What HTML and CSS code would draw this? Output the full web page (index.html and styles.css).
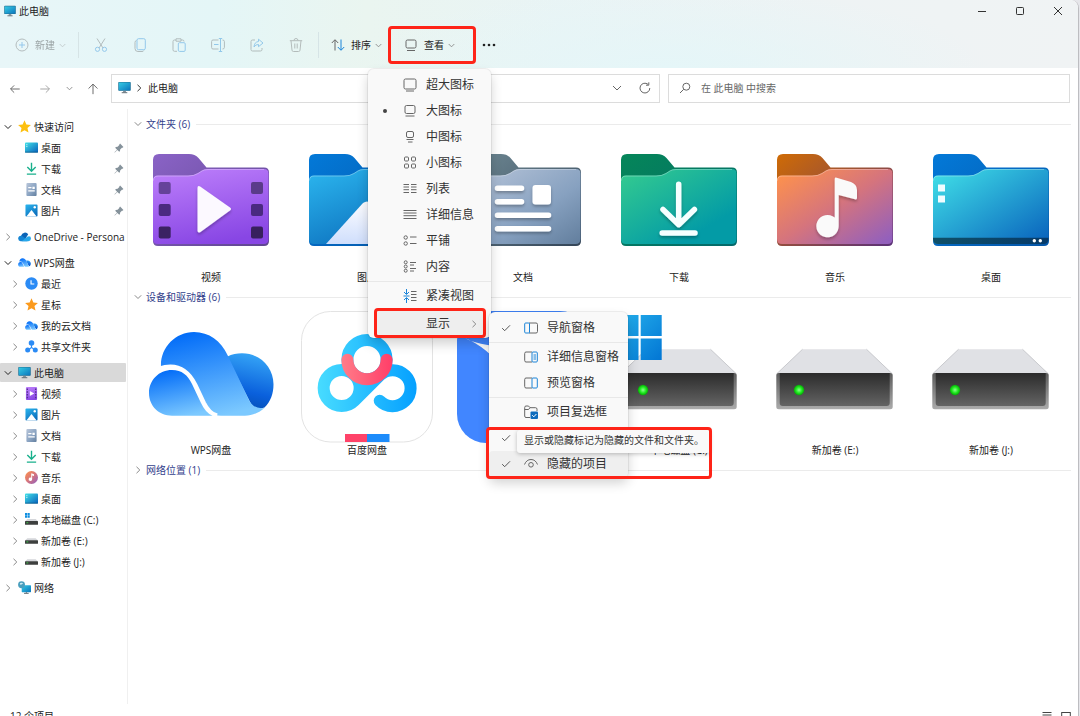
FILE: index.html
```html
<!DOCTYPE html>
<html lang="zh-CN">
<head>
<meta charset="utf-8">
<title>此电脑</title>
<link rel="stylesheet" href="styles.css">
</head>
<body>
<svg class="sprite" width="0" height="0" aria-hidden="true">
  <defs>
    <linearGradient id="g-screen" x1="0" y1="0" x2="1" y2="1"><stop offset="0" stop-color="#35cbe4"/><stop offset="1" stop-color="#0b76bd"/></linearGradient>
    <linearGradient id="g-vb" x1="0" y1="0" x2="1" y2="1"><stop offset="0" stop-color="#8a63c6"/><stop offset="1" stop-color="#5f4590"/></linearGradient>
    <linearGradient id="g-vf" x1="0.2" y1="0" x2="0.5" y2="1"><stop offset="0" stop-color="#bb7dfa"/><stop offset="1" stop-color="#8846e4"/></linearGradient>
    <linearGradient id="g-pb" x1="0" y1="0" x2="1" y2="1"><stop offset="0" stop-color="#0379d8"/><stop offset="1" stop-color="#0556a8"/></linearGradient>
    <linearGradient id="g-pf" x1="0" y1="0" x2="0.6" y2="1"><stop offset="0" stop-color="#2cb7ef"/><stop offset="1" stop-color="#0c6fbd"/></linearGradient>
    <linearGradient id="g-mt" x1="0" y1="0" x2="0" y2="1"><stop offset="0" stop-color="#fdfdff"/><stop offset="1" stop-color="#cfdefc"/></linearGradient>
    <linearGradient id="g-db" x1="0" y1="0" x2="1" y2="1"><stop offset="0" stop-color="#6f8994"/><stop offset="1" stop-color="#344558"/></linearGradient>
    <linearGradient id="g-df" x1="0" y1="0" x2="1" y2="1"><stop offset="0" stop-color="#b9c6da"/><stop offset="0.6" stop-color="#87a1c0"/><stop offset="1" stop-color="#627e9d"/></linearGradient>
    <linearGradient id="g-lb" x1="0" y1="0" x2="1" y2="1"><stop offset="0" stop-color="#058659"/><stop offset="1" stop-color="#04696b"/></linearGradient>
    <linearGradient id="g-lf" x1="0" y1="0" x2="0.9" y2="1"><stop offset="0" stop-color="#35cc8f"/><stop offset="0.8" stop-color="#039ba6"/></linearGradient>
    <linearGradient id="g-mb" x1="0" y1="0" x2="1" y2="1"><stop offset="0" stop-color="#cf6b05"/><stop offset="1" stop-color="#5a3178"/></linearGradient>
    <linearGradient id="g-mf" x1="0" y1="0.1" x2="0.9" y2="1"><stop offset="0" stop-color="#fd914d"/><stop offset="0.5" stop-color="#d5747d"/><stop offset="1" stop-color="#9360bc"/></linearGradient>
    <linearGradient id="g-kf" x1="0" y1="0" x2="1" y2="1"><stop offset="0" stop-color="#41e2e8"/><stop offset="1" stop-color="#0860bc"/></linearGradient>
    <linearGradient id="g-kt" x1="0" y1="0" x2="1" y2="0"><stop offset="0" stop-color="#0f5068"/><stop offset="1" stop-color="#063a69"/></linearGradient>
    <linearGradient id="g-w1" x1="0.3" y1="0" x2="0.6" y2="1"><stop offset="0" stop-color="#036df8"/><stop offset="1" stop-color="#7cc9ff"/></linearGradient>
    <linearGradient id="g-w2" x1="0.6" y1="0" x2="0.4" y2="1"><stop offset="0" stop-color="#36a6f7"/><stop offset="0.7" stop-color="#0a60dc"/><stop offset="1" stop-color="#0450b8"/></linearGradient>
    <linearGradient id="g-bd" gradientUnits="userSpaceOnUse" x1="16" y1="0" x2="116" y2="0"><stop offset="0" stop-color="#48dcff"/><stop offset="1" stop-color="#05a0ff"/></linearGradient>
    <linearGradient id="g-br" gradientUnits="userSpaceOnUse" x1="40" y1="0" x2="92" y2="0"><stop offset="0" stop-color="#ff7d89"/><stop offset="1" stop-color="#ff3d68"/></linearGradient>
    <linearGradient id="g-hd" x1="0" y1="0" x2="0" y2="1"><stop offset="0" stop-color="#2b2b2b"/><stop offset="1" stop-color="#646464"/></linearGradient>
    <linearGradient id="g-hs" x1="0" y1="0" x2="0" y2="1"><stop offset="0" stop-color="#5c5c5c"/><stop offset="1" stop-color="#ababab"/></linearGradient>
    <radialGradient id="g-led"><stop offset="0" stop-color="#8dff8d"/><stop offset="0.6" stop-color="#1be81b"/><stop offset="1" stop-color="#0aa30a"/></radialGradient>
    <linearGradient id="g-win" x1="0" y1="0" x2="1" y2="1"><stop offset="0" stop-color="#25b0ec"/><stop offset="1" stop-color="#0276d4"/></linearGradient>
    <filter id="f-soft" x="-20%" y="-20%" width="140%" height="150%"><feDropShadow dx="0" dy="2" stdDeviation="1.5" flood-opacity="0.28"/></filter>
  </defs>

  <symbol id="folder-back" viewBox="0 0 132 132"><path d="M8 22q0-6 6-6h30q6 0 9.500 4l8 9.500H119q5 0 5 5V103q0 5-5 5H13q-5 0-5-5z"/></symbol>
  <symbol id="folder-front" viewBox="0 0 132 132"><path d="M8 42.500q0-5 5-5H43q6 0 10-2.500l4-2.600q2.500-1.400 6-1.400H119q4.500 0 4.500 4.500V101q0 5-5 5H13q-5 0-5-5z"/><path d="M8.500 42.500q0-4.500 4.500-4.500H43q6 0 10-2.500l4-2.600q2.500-1.400 6-1.400H119" fill="none" stroke="#fff" stroke-opacity=".3"/></symbol>
  <symbol id="drive" viewBox="0 0 132 132">
    <path d="M33.500 38.300h64L123.500 63H7.500z" fill="#e0e1e5"/><path d="M33.500 38.300L7.500 63M97.500 38.300L123.500 63" stroke="#c9cace" fill="none"/>
    <rect x="7.300" y="62" width="116.400" height="36.300" rx="2.500" fill="url(#g-hs)"/>
    <path d="M10.700 62h110v30q0 3-3 3H13.700q-3 0-3-3z" fill="url(#g-hd)"/>
    <circle cx="30" cy="79" r="5.200" fill="url(#g-led)"/>
  </symbol>
  <symbol id="wps" viewBox="0 0 132 132">
    <path d="M82 45.700C87 43 92 42.300 97 42.300c18 0 31.500 14 31.500 31 0 9.500-3 17.500-9 23.200-7 2.500-11.500.5-14.500-5.500z" fill="url(#g-w2)"/>
    <path d="M16 56C15 37 30 21 49 21c15 0 27 9 33.500 23L104 89q4.500 9.500 15.500 8c-6 5-12.500 7.700-19.500 7.700H76C67 104.700 63 99 59 91l-9-19C43 58 32 53 16 56z" fill="url(#g-w1)"/>
    <path d="M14 58C32 52 43 60 50 74l8.500 18Q64 103 72 105" fill="none" stroke="#fff" stroke-width="5"/>
    <path d="M27 59c10 0 15.500 5 20 14l8.500 18q5 11 12 13.700H27C14 104.700 4 95 4 82S14 59 27 59z" fill="url(#g-w1)"/>
  </symbol>

  <symbol id="i-pc" viewBox="0 0 14 14"><rect x=".3" y="1" width="13.400" height="9.600" rx=".8" fill="#216d91"/><rect x=".9" y="1.600" width="12.200" height="8.400" fill="url(#g-screen)"/><path d="M5.500 10.600h3v1.600h-3z" fill="#7f8d96"/><path d="M4 12.600h6" stroke="#56646d" stroke-width="1"/></symbol>
  <symbol id="i-desk" viewBox="0 0 14 14"><rect x="0" y="1.500" width="14" height="11" rx="1" fill="url(#g-kf)"/><path d="M1.500 4h1M1.500 6h1" stroke="#fff"/><path d="M0 11.500h14q0 1-1 1H1q-1 0-1-1z" fill="#0b5a83"/></symbol>
  <symbol id="i-down" viewBox="0 0 14 14" fill="none" stroke="#18b08c" stroke-width="1.500"><path d="M7 .8v8.700M2.500 5.500L7 10l4.500-4.500M2 13h10"/></symbol>
  <symbol id="i-doc" viewBox="0 0 14 14"><rect x="1.500" y="0" width="11" height="14" rx="1" fill="url(#g-df)"/><path d="M3.500 5h3.500M3.500 8.500h7" stroke="#fff" stroke-width="1.300"/><path d="M8 4h2.500v2.500H8z" fill="#fff"/></symbol>
  <symbol id="i-pic" viewBox="0 0 14 14"><rect x=".5" y=".5" width="13" height="13" rx="1" fill="url(#g-pf)"/><path d="M1.500 13.500L7 6.500l5.500 7z" fill="#fff"/><circle cx="10.500" cy="3.500" r="1.300" fill="#fff"/></symbol>
  <symbol id="i-video" viewBox="0 0 14 14"><rect x="1" y="0" width="12" height="14" rx="1" fill="url(#g-vf)"/><path d="M2.500 1.500v11M11.500 1.500v11" stroke="#54308f" stroke-width="1.500" stroke-dasharray="1.600 1.400"/><path d="M5.200 4.200v5.600L10 7z" fill="#fff"/></symbol>
  <symbol id="i-music" viewBox="0 0 14 14"><circle cx="7" cy="7" r="7" fill="url(#g-mf)"/><path d="M6.700 2.500l3 1v2l-2-.6V9a1.900 1.900 0 1 1-1-1.700z" fill="#fff"/></symbol>
  <symbol id="i-star" viewBox="0 0 14 14"><path d="M7 .3l2 4.500 4.900.5-3.700 3.300 1.100 4.900L7 11l-4.300 2.500 1.100-4.900L.1 5.300 5 4.800z" fill="currentColor"/></symbol>
  <symbol id="i-one" viewBox="0 0 14 14"><path d="M3.500 6a4.200 4.200 0 0 1 7.500-1.500L7 11H3z" fill="#0b64b7"/><path d="M.2 9.300A3 3 0 0 1 4 6.200l7 4.800-1 1H2.800Q.4 11.800.2 9.300z" fill="#1585d4"/><path d="M4 12l6-4.800q4-1.300 4 2.200-.2 2.600-2.800 2.600z" fill="#28a8ea"/></symbol>
  <symbol id="i-wps" viewBox="3 18 127 90"><use href="#wps" width="132" height="132"/></symbol>
  <symbol id="i-clock" viewBox="0 0 14 14"><circle cx="7" cy="7" r="6.700" fill="#2b8bf5"/><path d="M6.500 3.500V7.500H10" fill="none" stroke="#fff" stroke-width="1.200"/></symbol>
  <symbol id="i-share" viewBox="0 0 14 14"><path d="M7 4v4L3 11M7 8l4 3" stroke="#2b8bf5" stroke-width="1.200" fill="none"/><circle cx="7" cy="3.300" r="3" fill="#2b8bf5"/><circle cx="2.900" cy="10.800" r="2.700" fill="#2b8bf5"/><circle cx="11.100" cy="10.800" r="2.700" fill="#2b8bf5"/></symbol>
  <symbol id="i-hdd" viewBox="0 0 14 14"><path d="M2.500 4.500h9L14 7H0z" fill="#d4d6da"/><rect y="6.600" width="14" height="4" rx=".6" fill="#3d3f3e"/><path d="M1.500 8.500h2" stroke="#39cf49"/></symbol>
  <symbol id="i-hddc" viewBox="0 0 14 14"><path d="M2.500 6.500h9L14 9H0z" fill="#d4d6da"/><rect y="8.600" width="14" height="4" rx=".6" fill="#3d3f3e"/><path d="M1.500 10.500h2" stroke="#39cf49"/><path d="M0 0h2.300v2.300H0zM2.800 0h2.300v2.300H2.800zM0 2.800h2.300v2.300H0zM2.800 2.800h2.300v2.300H2.800z" fill="#108fe0"/></symbol>
  <symbol id="i-net" viewBox="0 0 14 14"><rect x="4" y="4.500" width="10" height="7.500" rx=".6" fill="url(#g-screen)"/><path d="M6.500 13.300h5M9 12v1" stroke="#56646d"/><circle cx="3.800" cy="4" r="3.700" fill="#4a9fbe"/><path d="M2 2.500q2-1.500 3.500 0Q4 4.500 2.500 4zM3.500 6l2-1" fill="#d0eaf0"/></symbol>
  <symbol id="i-pin" viewBox="0 0 12 12"><path d="M7.300.7l4 4-1 1-.8-.1L7.400 7.700l-.2 2-.9.9-2.300-2.300L1 11.500l-.5-.5 3.200-3L1.400 5.700l.9-.9 2-.2 2.100-2.100-.1-.8z" fill="#85929b"/></symbol>
  <symbol id="c-right" viewBox="0 0 8 8"><path d="M2.500.8L5.800 4 2.500 7.200" fill="none" stroke="currentColor" stroke-width="1"/></symbol>
  <symbol id="c-down" viewBox="0 0 8 8"><path d="M.8 2.300L4 5.500l3.200-3.200" fill="none" stroke="currentColor" stroke-width="1"/></symbol>
  <symbol id="i-check" viewBox="0 0 10 10"><path d="M1.200 5.200l2.500 2.500L9 2.300" fill="none" stroke="currentColor"/></symbol>
</svg>

<div class="window">
  <header class="chrome">
    <div class="titlebar">
      <svg class="app-icon"><use href="#i-pc"/></svg>
      <span class="title">此电脑</span>
      <button class="caption" aria-label="最小化"><svg viewBox="0 0 10 10"><path d="M1 5.500h8"/></svg></button>
      <button class="caption" aria-label="最大化"><svg viewBox="0 0 10 10"><rect x="1.500" y="1.500" width="7" height="7" rx=".8"/></svg></button>
      <button class="caption" aria-label="关闭"><svg viewBox="0 0 10 10"><path d="M1 1l8 8M9 1L1 9"/></svg></button>
    </div>
    <div class="toolbar">
      <button class="tool new" disabled>
        <svg class="ic" viewBox="0 0 14 14"><circle cx="7" cy="7" r="6"/><path class="b" d="M7 4v6M4 7h6"/></svg>新建<svg class="chev"><use href="#c-down"/></svg>
      </button>
      <span class="sep"></span>
      <button class="tool icon" disabled aria-label="剪切"><svg class="ic" viewBox="0 0 14 14"><path d="M3 .5l6 9.500M11 .5L5 10"/><circle class="b" cx="3.500" cy="11.300" r="2.100"/><circle class="b" cx="10.500" cy="11.300" r="2.100"/></svg></button>
      <button class="tool icon" disabled aria-label="复制"><svg class="ic" viewBox="0 0 14 14"><path d="M3.500 2.500Q2 2.700 2 4.500v6q0 3 3 3h4q1.500 0 1.800-1"/><rect class="b" x="4" y=".7" width="8.300" height="11" rx="1.500"/></svg></button>
      <button class="tool icon" disabled aria-label="粘贴"><svg class="ic" viewBox="0 0 14 14"><path d="M5 13.300H2.500q-1.500 0-1.500-1.500V3.500Q1 2 2.500 2H4M9 2h1.500Q12 2 12 3.500M4 .8h5v2.400H4z"/><rect class="b" x="6.300" y="4.700" width="6.900" height="8.700" rx="1.200"/></svg></button>
      <button class="tool icon" disabled aria-label="重命名"><svg class="ic" viewBox="0 0 14 14"><path d="M7.500 2H2Q.6 2 .6 3.500v6Q.6 11 2 11h5.500M11.500 2q1.900 0 1.900 1.500v6q0 1.500-1.900 1.500"/><path class="b" d="M9.500.5v13M7.800.5h3.400M7.800 13.500h3.400M3 6.500h4.500"/></svg></button>
      <button class="tool icon" disabled aria-label="共享"><svg class="ic" viewBox="0 0 14 14"><path d="M5 2H2.500Q1 2 1 3.500v8Q1 13 2.500 13h8q1.500 0 1.500-1.500V10"/><path class="b" d="M8.500 1.200L13 5 8.500 8.700V6.500Q5.500 6.300 4 9q.3-5 4.500-5.500z"/></svg></button>
      <button class="tool icon" disabled aria-label="删除"><svg class="ic" viewBox="0 0 14 14"><path d="M.8 2.700h12.400M5 2.500q0-2 2-2t2 2M2 2.700l1 9.500q.1 1.300 1.500 1.300h5q1.400 0 1.500-1.300l1-9.500M5.800 5.500v5M8.200 5.500v5"/></svg></button>
      <span class="sep late"></span>
      <button class="tool sort">
        <svg class="ic" viewBox="0 0 14 14"><path d="M4 12.500V2M.8 5L4 1.700 7.200 5"/><path class="b" d="M10 1.500V12M6.800 9L10 12.300 13.200 9"/></svg>排序<svg class="chev"><use href="#c-down"/></svg>
      </button>
      <div class="view">
        <button class="tool view-button" aria-expanded="true">
          <svg class="ic" viewBox="0 0 14 14"><rect x="2" y="2" width="10" height="8" rx="1.500"/><path d="M3 12.500h8"/></svg>查看<svg class="chev"><use href="#c-down"/></svg>
        </button>
        <ul class="menu">
          <li><button class="row"><i></i><svg class="ic" viewBox="0 0 14 14"><rect x="1" y="1" width="12" height="10" rx="1.500"/><path d="M3 13h8"/></svg>超大图标</button></li>
          <li><button class="row"><i class="dot"></i><svg class="ic" viewBox="0 0 14 14"><rect x="2" y="1.500" width="10" height="8" rx="1.500"/><path d="M2.500 12h9"/></svg>大图标</button></li>
          <li><button class="row"><i></i><svg class="ic" viewBox="0 0 14 14"><rect x="3.500" y="1.500" width="7" height="6" rx="1.500"/><path d="M3.500 9.500h7M5 12h4.500"/></svg>中图标</button></li>
          <li><button class="row"><i></i><svg class="ic" viewBox="0 0 14 14"><rect x="1.500" y="1" width="4" height="4" rx="1"/><rect x="8.500" y="1" width="4" height="4" rx="1"/><rect x="1.500" y="8" width="4" height="4" rx="1"/><rect x="8.500" y="8" width="4" height="4" rx="1"/></svg>小图标</button></li>
          <li><button class="row"><i></i><svg class="ic" viewBox="0 0 14 14"><path d="M.5 2.500H6M8 2.500h5.500M.5 5H6M8 5h5.500M.5 7.700H6M8 7.700h5.500M.5 10.500H6M8 10.500h5.500"/></svg>列表</button></li>
          <li><button class="row"><i></i><svg class="ic" viewBox="0 0 14 14"><path d="M.5 2.500h13M.5 5h13M.5 7.700h13M.5 10.500h13"/></svg>详细信息</button></li>
          <li><button class="row"><i></i><svg class="ic" viewBox="0 0 14 14"><circle cx="2.700" cy="3.500" r="1.700"/><circle cx="2.700" cy="9.500" r="1.700"/><path d="M7 3h6.500M7 9.500h6.500"/></svg>平铺</button></li>
          <li><button class="row"><i></i><svg class="ic" viewBox="0 0 14 14"><circle cx="2.700" cy="2.300" r="1.500"/><circle cx="2.700" cy="6.500" r="1.500"/><circle cx="2.700" cy="10.700" r="1.500"/><path d="M7 2.500h6M7 5h4M7 8.500h6M7 11h4"/></svg>内容</button></li>
          <li class="rule"></li>
          <li><button class="row"><i></i><svg class="ic" viewBox="0 0 14 14"><path class="b" d="M3.500 0v5M1 3l2.500 2.500L6 3M3.500 14V9M1 11l2.500-2.500L6 11M.5 7h6"/><path d="M8 2.500h5.500M8 5.500h5.500M8 8.500h5.500M8 11.500h5.500"/></svg>紧凑视图</button></li>
          <li class="has-sub">
            <button class="row marked" aria-expanded="true">显示<svg class="chev"><use href="#c-right"/></svg></button>
            <ul class="menu submenu">
              <li><button class="row"><svg class="tick"><use href="#i-check"/></svg><svg class="ic" viewBox="0 0 14 14"><path d="M5 2h7q1.500 0 1.500 1.500v7Q13.500 12 12 12H5"/><rect class="b" x=".7" y="2" width="4.800" height="10" rx="1"/></svg>导航窗格</button></li>
              <li class="rule"></li>
              <li><button class="row"><i></i><svg class="ic" viewBox="0 0 14 14"><path d="M8 2H2Q.7 2 .7 3.500v7Q.7 12 2 12h6"/><rect class="b" x="8" y="2" width="5.300" height="10" rx="1"/><path class="b" d="M9.500 5h2.500M9.500 7h2.500M9.500 9h2.500"/></svg>详细信息窗格</button></li>
              <li><button class="row"><i></i><svg class="ic" viewBox="0 0 14 14"><path d="M8 2H2Q.7 2 .7 3.500v7Q.7 12 2 12h6"/><rect class="b" x="8" y="2" width="5.300" height="10" rx="1"/></svg>预览窗格</button></li>
              <li class="rule"></li>
              <li><button class="row"><i></i><svg class="ic" viewBox="0 0 14 14"><path d="M6 12.500H2q-1.300 0-1.300-1.500V2.500Q.7 1 2 1h2.500L6 2.700h5.500q1.500 0 1.500 1.500V6M.7 4.500H4.500L6 2.700"/><rect x="6.500" y="6.500" width="7.500" height="7.500" rx="1" class="fill"/><path d="M8.200 10.200l1.600 1.600L12.400 9" class="white"/></svg>项目复选框</button></li>
              <li><button class="row" aria-label="文件扩展名"><svg class="tick"><use href="#i-check"/></svg></button></li>
              <li><button class="row hover"><svg class="tick"><use href="#i-check"/></svg><svg class="ic" viewBox="0 0 14 14"><path d="M.5 7.500Q2.500 2.500 7 2.500t6.500 5"/><circle cx="7" cy="7.800" r="2.300"/></svg>隐藏的项目</button></li>
              <li class="tooltip" role="tooltip">显示或隐藏标记为隐藏的文件和文件夹。</li>
              <li class="highlight" aria-hidden="true"></li>
            </ul>
          </li>
        </ul>
      </div>
      <button class="tool more" aria-label="更多"><svg viewBox="0 0 14 4"><circle cx="2" cy="2" r="1.300"/><circle cx="7" cy="2" r="1.300"/><circle cx="12" cy="2" r="1.300"/></svg></button>
    </div>
  </header>

  <div class="navrow">
    <button class="nav" aria-label="后退"><svg viewBox="0 0 14 14"><path d="M2 7h10.500M6 2.800L1.800 7 6 11.200"/></svg></button>
    <button class="nav dim" aria-label="前进"><svg viewBox="0 0 14 14"><path d="M1.500 7H12M8 2.800L12.200 7 8 11.200"/></svg></button>
    <button class="nav small" aria-label="最近位置"><svg class="chev"><use href="#c-down"/></svg></button>
    <button class="nav" aria-label="上移"><svg viewBox="0 0 14 14"><path d="M7 13V1.500M1.800 6.500L7 1.300l5.200 5.200"/></svg></button>
    <div class="address">
      <svg class="pc"><use href="#i-pc"/></svg><svg class="chev"><use href="#c-right"/></svg><span>此电脑</span>
      <button aria-label="历史记录"><svg viewBox="0 0 12 12"><path d="M2 4l4 4 4-4"/></svg></button>
      <button aria-label="刷新"><svg viewBox="0 0 12 12"><path d="M10.800 6A4.900 4.900 0 1 1 9 2.300M9.800.3v2.900H7"/></svg></button>
    </div>
    <label class="search">
      <svg viewBox="0 0 12 12"><circle cx="7.300" cy="4.700" r="3.500"/><path d="M4.700 7.300L1 11"/></svg>
      <input type="text" placeholder="在 此电脑 中搜索" aria-label="搜索">
    </label>
  </div>

  <div class="content">
    <nav class="tree">
      <ul>
        <li><a href="#"><svg class="chev open"><use href="#c-down"/></svg><svg class="gold"><use href="#i-star"/></svg><span>快速访问</span></a>
          <ul>
            <li><a href="#"><i></i><svg><use href="#i-desk"/></svg><span>桌面</span><svg class="pin"><use href="#i-pin"/></svg></a></li>
            <li><a href="#"><i></i><svg><use href="#i-down"/></svg><span>下载</span><svg class="pin"><use href="#i-pin"/></svg></a></li>
            <li><a href="#"><i></i><svg><use href="#i-doc"/></svg><span>文档</span><svg class="pin"><use href="#i-pin"/></svg></a></li>
            <li><a href="#"><i></i><svg><use href="#i-pic"/></svg><span>图片</span><svg class="pin"><use href="#i-pin"/></svg></a></li>
          </ul></li>
        <li><a href="#"><svg class="chev"><use href="#c-right"/></svg><svg><use href="#i-one"/></svg><span>OneDrive - Persona</span></a></li>
        <li><a href="#"><svg class="chev open"><use href="#c-down"/></svg><svg><use href="#i-wps"/></svg><span>WPS网盘</span></a>
          <ul>
            <li><a href="#"><svg class="chev"><use href="#c-right"/></svg><svg><use href="#i-clock"/></svg><span>最近</span></a></li>
            <li><a href="#"><svg class="chev"><use href="#c-right"/></svg><svg class="orange"><use href="#i-star"/></svg><span>星标</span></a></li>
            <li><a href="#"><svg class="chev"><use href="#c-right"/></svg><svg><use href="#i-wps"/></svg><span>我的云文档</span></a></li>
            <li><a href="#"><svg class="chev"><use href="#c-right"/></svg><svg><use href="#i-share"/></svg><span>共享文件夹</span></a></li>
          </ul></li>
        <li><a href="#" class="selected" aria-current="page"><svg class="chev open"><use href="#c-down"/></svg><svg><use href="#i-pc"/></svg><span>此电脑</span></a>
          <ul>
            <li><a href="#"><svg class="chev"><use href="#c-right"/></svg><svg><use href="#i-video"/></svg><span>视频</span></a></li>
            <li><a href="#"><svg class="chev"><use href="#c-right"/></svg><svg><use href="#i-pic"/></svg><span>图片</span></a></li>
            <li><a href="#"><svg class="chev"><use href="#c-right"/></svg><svg><use href="#i-doc"/></svg><span>文档</span></a></li>
            <li><a href="#"><svg class="chev"><use href="#c-right"/></svg><svg><use href="#i-down"/></svg><span>下载</span></a></li>
            <li><a href="#"><svg class="chev"><use href="#c-right"/></svg><svg><use href="#i-music"/></svg><span>音乐</span></a></li>
            <li><a href="#"><svg class="chev"><use href="#c-right"/></svg><svg><use href="#i-desk"/></svg><span>桌面</span></a></li>
            <li><a href="#"><svg class="chev"><use href="#c-right"/></svg><svg><use href="#i-hddc"/></svg><span>本地磁盘 (C:)</span></a></li>
            <li><a href="#"><svg class="chev"><use href="#c-right"/></svg><svg><use href="#i-hdd"/></svg><span>新加卷 (E:)</span></a></li>
            <li><a href="#"><svg class="chev"><use href="#c-right"/></svg><svg><use href="#i-hdd"/></svg><span>新加卷 (J:)</span></a></li>
          </ul></li>
        <li><a href="#"><svg class="chev"><use href="#c-right"/></svg><svg><use href="#i-net"/></svg><span>网络</span></a></li>
      </ul>
    </nav>

    <main class="files">
      <section>
        <h2><svg class="chev"><use href="#c-down"/></svg>文件夹 (6)</h2>
        <div class="grid">
          <a class="item" href="#"><svg viewBox="0 0 132 132"><use href="#folder-back" fill="url(#g-vb)"/><use href="#folder-front" fill="url(#g-vf)"/>
            <g fill="#4a2a80"><rect x="13.700" y="44" width="12" height="12" rx="2" fill="#654299"/><rect x="13.700" y="66" width="12" height="12" rx="2"/><rect x="13.700" y="88.500" width="12" height="12" rx="2" fill="#3b2263"/><rect x="106" y="44" width="12" height="12" rx="2" fill="#5a3b8a"/><rect x="106" y="66" width="12" height="12" rx="2"/><rect x="106" y="88.500" width="12" height="12" rx="2" fill="#38205e"/></g>
            <path d="M52.500 50q0-3 3-1.300L85 69.500q2 1.500 0 3L55.500 94q-3 1.500-3-1.500z" fill="#fcf9ff" filter="url(#f-soft)"/></svg><span>视频</span></a>
          <a class="item" href="#"><svg viewBox="0 0 132 132"><use href="#folder-back" fill="url(#g-pb)"/><use href="#folder-front" fill="url(#g-pf)"/><path d="M25 106l37-41q4-3 8 0l37 41z" fill="url(#g-mt)"/></svg><span>图片</span></a>
          <a class="item" href="#"><svg viewBox="0 0 132 132"><use href="#folder-back" fill="url(#g-db)"/><use href="#folder-front" fill="url(#g-df)"/><g filter="url(#f-soft)"><path d="M40.500 50.300H64.500M40.500 63.700H64.500M40.500 77.300H91.500M40.500 90.700H91.500" stroke="#fff" stroke-width="5.500" stroke-linecap="round"/><rect x="75.500" y="47" width="18.500" height="19.500" rx="3" fill="#fff"/></g></svg><span>文档</span></a>
          <a class="item" href="#"><svg viewBox="0 0 132 132"><use href="#folder-back" fill="url(#g-lb)"/><use href="#folder-front" fill="url(#g-lf)"/><path d="M65.700 46.200V86M50 71.500l15.700 15.200L81.400 71.500M49.200 95H82" fill="none" stroke="#f6ffff" stroke-width="5.500" stroke-linecap="round" stroke-linejoin="round" filter="url(#f-soft)"/></svg><span>下载</span></a>
          <a class="item" href="#"><svg viewBox="0 0 132 132"><use href="#folder-back" fill="url(#g-mb)"/><use href="#folder-front" fill="url(#g-mf)"/><path d="M65.700 41q0-2 2-1.300L82 44q6 2.500 6 8v8q0 2-2 1.300L69.700 57V87.700A11.200 11.200 0 1 1 65.700 79.500z" fill="#fafafa" filter="url(#f-soft)"/></svg><span>音乐</span></a>
          <a class="item" href="#"><svg viewBox="0 0 132 132"><use href="#folder-back" fill="url(#g-pb)"/><use href="#folder-front" fill="url(#g-kf)"/><path d="M8 99.700h115.500V101q0 5-5 5H13q-5 0-5-5z" fill="url(#g-kt)"/><path d="M13 46.500h7v7h-7zM13 57.500h7v7h-7z" fill="#f0fdff"/><circle cx="109.300" cy="102.700" r="1.700" fill="#fff"/><circle cx="115.300" cy="102.700" r="1.700" fill="#fff"/></svg><span>桌面</span></a>
        </div>
      </section>
      <section>
        <h2><svg class="chev"><use href="#c-down"/></svg>设备和驱动器 (6)</h2>
        <div class="grid">
          <a class="item" href="#"><svg viewBox="0 0 132 132"><use href="#wps"/></svg><span>WPS网盘</span></a>
          <a class="item" href="#"><svg viewBox="0 0 132 132"><rect x=".5" y=".5" width="131" height="130.500" rx="29" fill="#fff" stroke="#e3e3e3"/><g fill="none" stroke-width="12" stroke-linecap="round"><path d="M78.700 89.700A18 18 0 1 0 79 64.300L53.400 89.700A18 18 0 1 1 53.400 64.300 18 18 0 0 1 53.400 89.700" stroke="url(#g-bd)"/><circle cx="66" cy="48.700" r="19.600" stroke="url(#g-bd)"/><path d="M46.400 48.700a19.600 19.600 0 0 0 39.200 0" stroke="url(#g-br)"/></g><path d="M44 123h22v8H44z" fill="#ff4369"/><path d="M66 123h22.500v8H66z" fill="#1d8cfb"/></svg><span>百度网盘</span></a>
          <a class="item" href="#"><svg viewBox="0 0 132 132"><rect y="0" width="132" height="132" rx="29" fill="#4186ff"/><path d="M8 27Q20 34 48 36V60Q30 36 8 27z" fill="#fff"/></svg><span></span></a>
          <a class="item" href="#"><svg viewBox="0 0 132 132"><use href="#drive"/><path d="M4.500 4h21v21h-21zM27.700 4h21v21h-21zM4.500 27.500h21V49h-21zM27.700 27.500h21V49h-21z" fill="url(#g-win)"/></svg><span>本地磁盘 (C:)</span></a>
          <a class="item" href="#"><svg viewBox="0 0 132 132"><use href="#drive"/></svg><span>新加卷 (E:)</span></a>
          <a class="item" href="#"><svg viewBox="0 0 132 132"><use href="#drive"/></svg><span>新加卷 (J:)</span></a>
        </div>
      </section>
      <section>
        <h2><svg class="chev"><use href="#c-right"/></svg>网络位置 (1)</h2>
      </section>
    </main>
  </div>

  <footer class="status">
    <span>12 个项目</span>
    <button aria-label="详细信息视图"><svg viewBox="0 0 10 10"><path d="M.5 1.500h9M.5 4h9M.5 6.500h9M.5 9h9"/></svg></button>
    <button aria-label="大图标视图"><svg viewBox="0 0 10 10"><rect x=".7" y="1.500" width="8.600" height="7"/></svg></button>
  </footer>
</div>
</body>
</html>
```

FILE: styles.css
```css
:root {
  --red: #fe2418;
  --blue: #1a84d8;
  --text: #222;
}

* { box-sizing: border-box; }

body {
  margin: 0;
  overflow: hidden;
  background: #e6e6ea;
  color: var(--text);
  font: 10px/14px "Open Sans", "Noto Sans CJK SC", sans-serif;
}

button, input { font: inherit; color: inherit; border: 0; padding: 0; background: none; }
ul { list-style: none; margin: 0; padding: 0; }
a { color: inherit; text-decoration: none; }
svg { flex: none; display: block; }
.sprite { position: absolute; }

.window {
  display: flex;
  flex-direction: column;
  height: calc(100vh + 12px);
  margin-right: 1px;
  border-right: 1px solid #bdbdc1;
  border-top-right-radius: 8px;
  background: #fff;
}

.chrome {
  border-top-right-radius: 8px;
  background:
    radial-gradient(ellipse 320px 80px at 62% 100%, #e5f6f8, transparent),
    linear-gradient(90deg, #e8f6f8 0%, #e4f6f7 20%, #eaf5f0 34%, #e9f4f5 52%, #eef3f4 75%, #f0f3f4 100%);
}

.titlebar { display: flex; align-items: center; height: 21px; padding: 0 1px 0 4px; }
.app-icon { width: 12px; height: 12px; margin-right: 3px; }
.title { flex: 1; }
.caption { display: grid; place-items: center; width: 38px; height: 20px; }
.caption svg { width: 10px; height: 10px; fill: none; stroke: #333; }

.toolbar { display: flex; align-items: center; height: 47px; padding: 1px 0 0 8px; }
.tool { display: flex; align-items: center; justify-content: flex-start; height: 38px; gap: 6px; }
.tool:disabled { opacity: .4; }
.ic { width: 14px; height: 14px; fill: none; stroke: #666; }
.ic .b { stroke: var(--blue); }
.ic .fill { fill: #0f6cbd; stroke: none; }
.ic .white { stroke: #fff; }
.chev { width: 8px; height: 8px; color: #888; }
.tool .chev { width: 7px; height: 7px; margin-left: -2px; }
.new { width: 70px; padding-left: 7px; }
.icon { width: 39px; justify-content: center; }
.sep { width: 1px; height: 26px; margin-right: 2px; background: #d6e4e6; }
.sep.late { margin: 0 0 0 3px; }
.sort { width: 69px; padding-left: 12px; }
.view { position: relative; z-index: 2; }
.view-button { width: 88px; padding-left: 13px; border: 3px solid var(--red); border-radius: 4px; }
.more { width: 26px; justify-content: center; }
.more svg { width: 14px; height: 4px; fill: #222; }

.menu {
  position: absolute;
  top: 43px;
  left: -20px;
  width: 123px;
  padding-top: 3px;
  border-radius: 6px;
  background: #f9f9f9;
  box-shadow: 0 0 0 1px rgba(0, 0, 0, .06), 0 6px 12px rgba(0, 0, 0, .18);
  font-size: 12px;
  color: #333;
}
.row { display: flex; align-items: center; width: 100%; height: 26px; padding-left: 13px; white-space: nowrap; }
.row i { width: 8px; }
.row .dot::before { content: ""; display: block; width: 4px; height: 4px; margin: 0 2px; border-radius: 50%; background: #444; }
.row .ic { margin: 0 9px 0 14px; }
.rule { height: 1px; margin: 1px 0; background: #e8e8e8; }
.has-sub { position: relative; margin-top: -1px; }
.row.marked {
  justify-content: space-between;
  width: auto;
  min-width: 112px;
  height: 30px;
  margin: 0 5px 0 6px;
  padding: 2px 5px 0 49px;
  border: 3px solid var(--red);
  border-radius: 4px;
  background: #eee;
}

.submenu { top: 4px; left: 121px; width: 139px; }
.submenu .row { padding-left: 12px; }
.submenu .row i, .tick { width: 10px; height: 10px; color: #555; }
.submenu .row .ic { margin-left: 13px; }
.row.hover { background: #efefef; border-radius: 4px; }
.tooltip {
  position: absolute;
  top: 118px;
  left: 28px;
  padding: 3px 6px 6px 7px;
  border-radius: 3px;
  background: #f9f9f9;
  box-shadow: 0 1px 4px rgba(0, 0, 0, .25);
  font-size: 10px;
  white-space: nowrap;
}
.highlight {
  position: absolute;
  top: 115px;
  left: -3px;
  width: 226px;
  height: 52px;
  border: 3px solid var(--red);
  border-radius: 4px;
}

.navrow { display: flex; align-items: center; padding: 6px 8px 0 5px; }
.nav { display: grid; place-items: center; width: 20px; height: 20px; margin-right: 10px; }
.nav.dim { margin-right: 5px; opacity: .6; }
.nav.small { width: 19px; margin-right: 4px; }
.nav:nth-of-type(4) { margin-right: 8px; }
.nav svg { width: 12px; height: 12px; fill: none; stroke: #555; }
.nav .chev { width: 7px; height: 7px; }
.address, .search { display: flex; align-items: center; height: 29px; border: 1px solid #dcdcdc; min-width: 0; }
.address { flex: 556; padding: 0 0 2px 6px; margin-right: 8px; }
.address .pc { width: 13px; height: 13px; }
.address .chev { margin: 0 5px 0 4px; color: #333; }
.address span { flex: 1; }
.address button { display: grid; place-items: center; width: 28px; height: 27px; }
.address button svg, .search svg { width: 12px; height: 12px; fill: none; stroke: #666; }
.search { flex: 401; padding: 0 0 1px 10px; }
.search input { flex: 1; min-width: 0; margin-left: 10px; outline: 0; }
.search input::placeholder { color: #666; opacity: 1; }

.content { display: flex; flex: 1; min-height: 0; }
.tree { flex: none; width: 128px; margin-top: 6px; padding-top: 7px; border-right: 1px solid #f0f0f0; overflow: hidden; }
.tree > ul { display: grid; gap: 5px; }
.tree a { display: flex; align-items: center; height: 21px; padding-left: 4px; margin-right: 1px; overflow: hidden; white-space: nowrap; }
.tree ul ul a { padding-left: 11px; }
.tree a > svg:not(.chev):not(.pin) { width: 13px; height: 13px; margin-right: 3px; }
.tree .chev, .tree i { width: 8px; height: 8px; margin-right: 6px; }
.tree .open { color: #222; }
.tree .selected { height: 19px; margin-top: 1px; margin-bottom: 1px; border-radius: 1px; background: #d9d9d9; }
.tree .pin { width: 10px; height: 10px; margin: 0 2px 0 auto; }
.gold { color: #fdc00f; }
.orange { color: #fb9a1d; }

.files { flex: 1; min-width: 0; padding: 11px 7px 0 5px; }
.files h2 { display: flex; align-items: center; height: 20px; margin: 0; font-size: 10px; font-weight: 400; color: #33418c; }
.files h2 .chev { margin: 0 4px 0 1px; }
.files h2::after { content: ""; flex: 1; height: 1px; margin-left: 6px; background: #ebebeb; }
.grid { display: grid; grid-template-columns: repeat(auto-fill, 156px); padding: 4px 0 3px; }
.item { display: flex; flex-direction: column; align-items: center; }
.item svg { width: 132px; height: 132px; }
.item span { height: 14px; }

.status { display: flex; align-items: center; height: 24px; padding: 0 7px 0 10px; }
.status span { flex: 1; }
.status button { width: 10px; height: 10px; margin-left: 9px; }
.status svg { width: 10px; height: 10px; fill: none; stroke: #444; }
```
